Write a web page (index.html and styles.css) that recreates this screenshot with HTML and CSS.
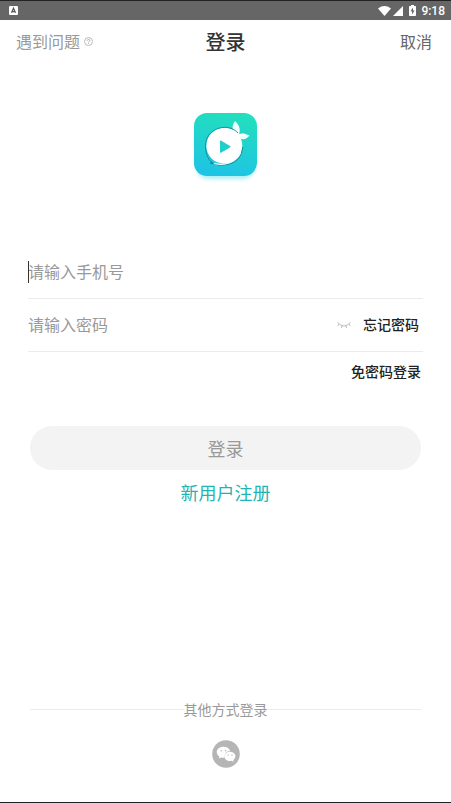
FILE: index.html
```html
<!DOCTYPE html>
<html lang="zh-CN">
<head>
<meta charset="utf-8">
<meta name="viewport" content="width=device-width, initial-scale=1">
<title>登录</title>
<link rel="stylesheet" href="styles.css">
</head>
<body>
<div class="status-bar">
  <svg class="status-app" viewBox="0 0 8 8" aria-hidden="true"><rect width="8" height="8" rx="1" fill="#fff"/><path d="M2.2 6 4 2 5.8 6M3 4.9h2" fill="none" stroke="#555" stroke-width="1.1"/></svg>
  <div class="status-icons">
    <svg width="13" height="10" viewBox="0 0 13 10" aria-hidden="true"><path d="M0 2.4Q6.500-2.400 13 2.400L6.500 10Z" fill="#fff"/></svg>
    <svg width="10" height="10" viewBox="0 0 10 10" aria-hidden="true"><path d="M10 0V10H0Z" fill="#fff"/></svg>
    <svg class="battery" width="7" height="11" viewBox="0 0 7 11" aria-hidden="true"><path d="M2 0h3v1h1.200q.8 0 .8.800v8.400q0 .8-.8.800H.8q-.8 0-.8-.8V1.800Q0 1 .8 1H2Z" fill="#fff"/><path d="M4 2.500 1.500 6.300H3.100V9.500L5.600 5.500H4Z" fill="#666"/></svg>
    <time>9:18</time>
  </div>
</div>
<header class="header">
  <a class="help" href="#">遇到问题<svg width="9" height="9" viewBox="0 0 9 9" aria-hidden="true"><circle cx="4.500" cy="4.500" r="4" fill="none" stroke="#aaa" stroke-width=".8"/><path d="M3.200 3.700C3.200 1.800 5.900 2 5.800 3.600 5.700 4.500 4.500 4.400 4.500 5.500M4.500 6.200V7" fill="none" stroke="#999" stroke-width=".8"/></svg></a>
  <h1>登录</h1>
  <button class="cancel" type="button">取消</button>
</header>
<main class="main">
  <svg class="logo" viewBox="0 0 71 74" role="img" aria-label="应用图标">
    <defs>
      <linearGradient id="tile" x1=".6" y1="0" x2=".4" y2="1"><stop offset="0" stop-color="#22dfbd"/><stop offset="1" stop-color="#1ec3e5"/></linearGradient>
      <filter id="soft" x="-20%" y="-20%" width="140%" height="140%"><feGaussianBlur stdDeviation="2"/></filter>
    </defs>
    <rect x="6" y="10" width="59" height="60" rx="13" fill="#7be5ee" opacity=".65" filter="url(#soft)"/>
    <rect x="4" y="4" width="63" height="63" rx="13" fill="url(#tile)"/>
    <path d="M47 27C41 21 42 17 45 12C49 16 51 20 49 25C51 24 55 24 59.500 26.500C56 31 51 31.500 47 27Z" fill="#f3fffd"/>
    <circle cx="34.300" cy="36.700" r="18" fill="#fff"/>
    <path d="M22 53.500Q16 49 15.500 38C15 25 25 18.500 35 18.300Q43 18.500 48 24M52.800 38Q52 52 38 55.500Q29 57.500 21 54" fill="none" stroke="#168995" stroke-width=".9"/>
    <path d="M24 54.300Q32 56.500 39 54Q47 51 50.500 44" fill="none" stroke="#e5ffff" stroke-width="1.200"/>
    <circle cx="21.500" cy="54" r="1.200" fill="#168995"/>
    <path d="M30 32.500Q30 31 31.400 31.700L40 37Q41 37.700 40 38.400L31.400 43.500Q30 44.300 30 42.800Z" fill="#20cfcd"/>
  </svg>
  <form class="form">
    <div class="field">
      <span class="caret"></span>
      <input type="tel" aria-label="手机号" placeholder="请输入手机号">
    </div>
    <div class="field">
      <input type="password" aria-label="密码" placeholder="请输入密码">
      <button class="eye" type="button" aria-label="显示密码"><svg width="14" height="8" viewBox="0 0 14 8" aria-hidden="true"><path d="M.5 1.500Q7 8.500 13.500 1.500M2.200 3 .8 4.800M5.200 4.700 4.500 7M8.800 4.700 9.500 7M11.800 3 13.200 4.800" fill="none" stroke="#bbb"/></svg></button>
      <a class="strong-link" href="#">忘记密码</a>
    </div>
    <a class="strong-link code-login" href="#">免密码登录</a>
    <button class="submit" type="submit">登录</button>
    <a class="register" href="#">新用户注册</a>
  </form>
  <section class="other">
    <h2>其他方式登录</h2>
    <button class="wechat" type="button" aria-label="微信登录">
      <svg viewBox="0 0 28 28" aria-hidden="true"><circle cx="14" cy="14" r="13.800" fill="#b5b5b5"/><path d="M11.500 6.800C7.500 6.800 4.800 9.200 4.800 12.200C4.800 14 5.800 15.500 7.400 16.500L6.900 18.600L9.300 17.400Q11 17.900 12.800 17.600C12 13.500 14.800 10.800 18.200 10.900C17.400 8.400 14.700 6.800 11.500 6.800Z" fill="#fff"/><path d="M18 11.700C14.800 11.700 12.500 13.800 12.500 16.400C12.500 19.600 16 21.700 19.600 20.800L21.700 21.900L21.200 20C25.300 17.200 23.500 11.700 18 11.700Z" fill="#fff"/><g fill="#bbb"><circle cx="9.300" cy="10.800" r=".8"/><circle cx="13.700" cy="10.800" r=".8"/><circle cx="16.200" cy="15" r=".7"/><circle cx="20" cy="15" r=".7"/></g></svg>
    </button>
  </section>
</main>
</body>
</html>
```
FILE: styles.css
```css
* {
  box-sizing: border-box;
}

body {
  display: flex;
  flex-direction: column;
  min-height: 100vh;
  margin: 0;
  border-top: 1px solid #222;
  border-bottom: 1px solid #222;
  background: #fff;
  font-family: Roboto, "Noto Sans CJK SC", sans-serif;
}

button,
input {
  padding: 0;
  border: 0;
  background: none;
  font: inherit;
}

a {
  text-decoration: none;
}

svg {
  display: block;
}

.status-bar {
  display: flex;
  align-items: center;
  justify-content: space-between;
  height: 19px;
  padding: 0 6px 0 9px;
  background: #666;
  color: #fff;
  font-size: 12px;
  font-weight: 500;
}

.status-app {
  width: 9px;
  height: 9px;
}

.status-icons {
  display: flex;
  align-items: center;
  gap: 2px;
}

.battery {
  margin: 0 3px 0 4px;
}

.header {
  display: grid;
  grid-template-columns: 1fr auto 1fr;
  align-items: center;
  height: 42px;
  padding: 0 16px;
}

.help {
  display: flex;
  align-items: center;
  gap: 4px;
  color: #999;
  font-size: 16px;
}

.header h1 {
  margin: 0;
  color: #333;
  font-size: 20px;
  font-weight: 500;
}

.cancel {
  justify-self: end;
  margin-right: 3px;
  color: #666;
  font-size: 16px;
}

.main {
  display: flex;
  flex: 1;
  flex-direction: column;
  padding: 47px 28px 34px;
}

.logo {
  align-self: center;
  width: 71px;
  height: 74px;
}

.form {
  display: flex;
  flex-direction: column;
  margin-top: 63px;
}

.field {
  position: relative;
  display: flex;
  align-items: center;
  height: 53px;
  padding-right: 4px;
  border-bottom: 1px solid #ebebeb;
}

.field input {
  flex: 1;
  min-width: 0;
  height: 32px;
  outline: none;
  color: #333;
  font-size: 16px;
}

.field input::placeholder {
  color: #999;
}

.caret {
  position: absolute;
  left: 0;
  width: 1px;
  height: 22px;
  background: #333;
}

.eye {
  margin-right: 12px;
}

.strong-link {
  color: #222;
  font-size: 14px;
  font-weight: 500;
  line-height: 20px;
}

.code-login {
  align-self: flex-end;
  margin: 10px 2px 0;
}

.submit {
  height: 44px;
  margin: 44px 2px 0;
  border-radius: 22px;
  background: #f3f3f3;
  color: #999;
  font-size: 18px;
}

.register {
  align-self: center;
  margin-top: 10px;
  color: #1fb5b5;
  font-size: 18px;
  line-height: 28px;
}

.other {
  display: flex;
  flex-direction: column;
  align-items: center;
  gap: 20px;
  margin: auto 2px 0;
}

.other h2 {
  display: flex;
  align-items: center;
  align-self: stretch;
  margin: 0;
  color: #999;
  font-size: 14px;
  font-weight: 400;
  line-height: 20px;
}

.other h2::before,
.other h2::after {
  flex: 1;
  height: 1px;
  margin-bottom: 2px;
  background: #ebebeb;
  content: "";
}

.wechat {
  width: 28px;
  height: 28px;
}
```
